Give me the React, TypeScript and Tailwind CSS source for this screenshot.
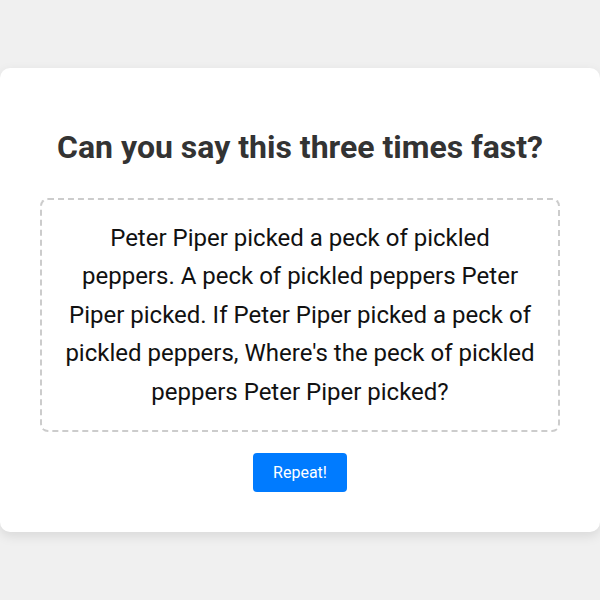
export default function App() {
  return (
    <div className="flex min-h-screen items-center justify-center bg-[#f0f0f0] font-['Roboto',sans-serif]">
      <div className="w-full max-w-[600px] rounded-[10px] bg-white p-10 text-center shadow-[0_4px_12px_rgba(0,0,0,0.1)]">
        <h1 className="mt-5 mb-8 text-[32px] leading-[38px] font-bold text-[#333]">
          Can you say this three times fast?
        </h1>
        <div className="rounded-lg border-2 border-dashed border-[#ccc] p-[19px] text-[24px] leading-[38.4px] text-[#111]">
          Peter Piper picked a peck of pickled peppers. A peck of pickled peppers Peter
          Piper picked. If Peter Piper picked a peck of pickled peppers, Where's the peck
          of pickled peppers Peter Piper picked?
        </div>
        <button
          type="button"
          className="mt-[21px] h-[39px] rounded bg-[#007bff] px-5 text-base text-white"
        >
          Repeat!
        </button>
      </div>
    </div>
  );
}
